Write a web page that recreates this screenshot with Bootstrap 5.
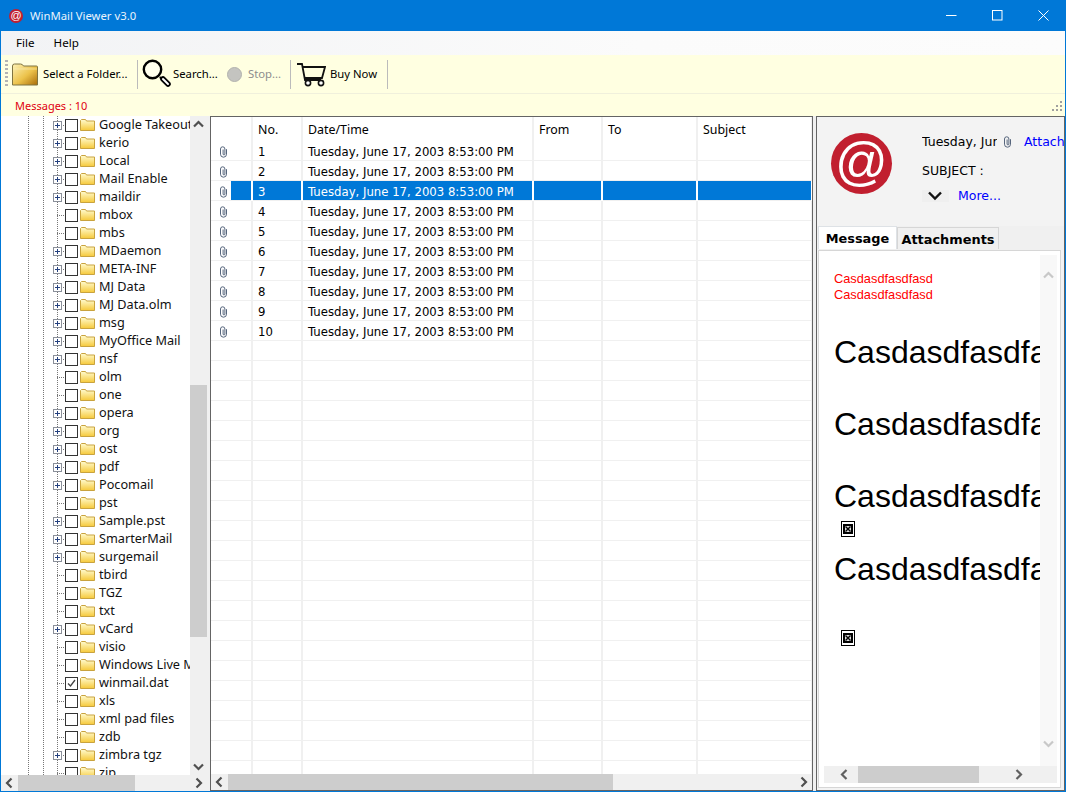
<!DOCTYPE html>
<html lang="en">
<head>
<meta charset="utf-8">
<title>WinMail Viewer v3.0</title>
<link rel="stylesheet" href="https://cdn.jsdelivr.net/npm/bootstrap@5.3.0/dist/css/bootstrap.min.css">
<style>
html,body{height:100%;overflow:hidden}
body{background:#0078d7;color:#000;font:11.3px/1.2 "Noto Sans",sans-serif;padding:0 1px 1px}
svg{display:block;flex:none}
.app{height:791px}
.titlebar{height:31px;color:#fff;font-size:11.3px;margin:0 -1px}
.t-logo{width:14px;height:14px;background:#c11f2f;color:#fff;font:11px/13px "Liberation Sans",sans-serif;margin:0 7px 0 9px;text-align:center}
.t-text{color:#e8f3fc}
.win{width:46px;height:31px;color:#fff}
.menubar{height:24px;background:linear-gradient(90deg,#f2f3f5,#fbfbfb 60%,#fcfcfc);font-size:11.6px;padding-left:15px;gap:19px}
.toolbar{height:39px;background:#ffffe1;border-bottom:1px solid #f0f0dc;padding-left:4px}
.grip{width:3px;height:28px;margin-right:4px;background:repeating-linear-gradient(#b4b4b4 0 2px,transparent 2px 4px)}
.sep{width:1px;height:29px;background:#bbb}
.tool{white-space:nowrap}
.t-select{margin-left:5px;width:85px}
.s1{margin-left:9px}
.t-glass{margin-left:4px}
.t-search{margin-left:1px;width:44px}
.stop{width:15px;height:15px;background:#c4c4c0;border:1px solid #b2b2ae;margin-left:10px}
.t-stop{margin-left:6px;width:33px;color:#8d8d8d}
.t-cart{margin-left:6px}
.t-buy{margin-left:4px;width:49px}
.s3{margin-left:8px}
.statusbar{height:22px;background:#ffffe1;color:#e00010;padding:2px 2px 0 14px;font-size:11px}
.main{height:675px;background:#f0f0f0;gap:3px}
.tree-pane{width:206px;background:#fff}
.tree-view{width:189px;overflow:hidden;font-size:12.7px;color:#111}
.tree{margin:0;padding:0;list-style:none;background-image:repeating-linear-gradient(#777 0 1px,transparent 1px 2px),repeating-linear-gradient(#777 0 1px,transparent 1px 2px),repeating-linear-gradient(#777 0 1px,transparent 1px 2px);background-size:1px 100%;background-position:27px 0,42px 0,56px 0;background-repeat:no-repeat}
.tree li{height:18px;padding-left:52px;white-space:nowrap}
.tw{width:12px;height:9px;background:repeating-linear-gradient(90deg,#777 0 1px,transparent 1px 2px) 4px 4px/8px 1px no-repeat;flex:none}
.plus{width:9px;height:9px;background:#fff;border:1px solid #8a8f99;display:block;position:relative}
.plus::before{content:"";position:absolute;left:1px;right:1px;top:3px;height:1px;background:#24407f}
.plus::after{content:"";position:absolute;top:1px;bottom:1px;left:3px;width:1px;background:#24407f}
.cb{width:13px;height:13px;margin-right:2px;border:1px solid #333;background:#fff;flex:none}
.tree .fo{margin-right:4px}
.sb{background:#f0f0f0;flex:none}
.sb-v{width:17px}
.sb-h{height:16px}
.arrow{width:17px;height:17px;color:#505050;flex:none}
.sb-h .arrow{height:16px}
.thumb{background:#cdcdcd;flex:none}
.tree-v-thumb{height:252px;margin-top:252px}
.tree-h-thumb{width:117px}
.list-pane{width:603px;border:1px solid #646464;background:#fff}
.grid-view{height:657px;overflow:hidden}
.grid{table-layout:fixed;width:601px;margin:0;--bs-table-bg:transparent;--bs-table-color:#000;color:#000;font-size:12.4px;border-collapse:collapse}
.grid th,.grid td{height:20px;padding:4px 0 0 5px;font-weight:400;border:0;border-bottom:1px solid #f0f0f0;border-right:2px solid #f0f0f0;vertical-align:middle;white-space:nowrap;overflow:hidden;box-shadow:none}
.grid th{height:23px;border-bottom:0;padding-top:3px}
.grid tbody td{font-family:"DejaVu Sans",sans-serif;font-size:11.7px}
.grid th:first-child,.grid td:first-child{padding-left:8px}
.grid tr.sel td{background:#0078d7;color:#fff;border-right-color:#fff}
.grid tr.sel td:first-child{background:linear-gradient(90deg,#fff 20px,#0078d7 20px)}
.list-h-thumb{width:385px}
.read-pane{width:249px;border:1px solid #646464;background:#f3f3f3}
.head{height:110px}
.avatar{width:61px;height:61px;background:#c11f2f;color:#fff;font:52px/56px "Liberation Sans",sans-serif;margin:16px 0 0 14px;text-align:center;flex:none}
.meta{margin-left:30px;padding-top:17px;width:142px;overflow:hidden;font:12.5px/1.2 "DejaVu Sans",sans-serif}
.clipped{width:75px;overflow:hidden;white-space:nowrap;flex:none}
.meta-clip{margin:0 12px 0 6px}
.blue{color:#00f;text-decoration:none;white-space:nowrap}
.subject{margin-top:14px;white-space:nowrap}
.chev{width:28px;height:12px;margin:0 9px 0 -1px;background:#efefef;flex:none}
.more{margin-top:10px}
.tabs{height:24px;background:#f0f0f0;padding-left:1px;border:0;margin-top:1px}
.tabs .nav-link{border-radius:0;color:#000;font:700 12.9px/1 "DejaVu Sans",sans-serif;padding:4px 0 0;border:1px solid #d6d6d6;border-bottom:0;background:#f0f0f0;width:102px;height:22px;margin-top:1px;display:flex;align-items:center;justify-content:center;margin-bottom:0}
.tabs .nav-link.active{width:79px;height:23px;margin-top:0;background:#fff;padding:2px 0 0;position:relative;z-index:1;margin-bottom:-1px}
.tab-body{margin:0 3px 2px 1px;border:1px solid #d6d6d6;background:#fff;padding:4px 3px 4px 5px;height:539px}
.doc-wrap{height:511px}
.doc{overflow:hidden;white-space:nowrap;font-family:"Liberation Sans",sans-serif;padding:16px 0 0 10px;min-width:0}
.sb-light{background:#f8f8f8;color:#c8c8c8;padding:12px 0 14px}
.sb-light .arrow{color:#c8c8c8}
.red{color:#f00;font-size:12.8px;line-height:16px}
.big{font-size:32px;line-height:38px;color:#000}
.big-1{margin-top:30px}
.big-n{margin-top:34px}
.broken{width:14px;height:16px;border:1px solid #000;padding:2px 1px;margin-left:7px;background:#fff}
.broken-1{margin-top:6px}
.broken-2{margin-top:42px}
.big-4{margin-top:13px}
.doc-h-thumb{width:121px;margin-left:5px}
.doc-sb{height:17px;padding-left:12px}
.doc-sb .arrow{color:#606060}
.doc-next{margin-right:30px}
</style>
</head>
<body>
<svg width="0" height="0" class="position-absolute">
<defs>
<linearGradient id="fy" x1="0" y1="0" x2="0" y2="1"><stop offset="0" stop-color="#fffbd0"/><stop offset="1" stop-color="#f6c93a"/></linearGradient>
<linearGradient id="fb" x1="0" y1="0" x2="1" y2="1"><stop offset="0" stop-color="#fdf3b8"/><stop offset=".55" stop-color="#ecc24a"/><stop offset="1" stop-color="#a96c08"/></linearGradient>
<symbol id="fold" viewBox="0 0 15 12"><path d="M.5 11.500V1.500l1-1h4l1 1.500h8v9.500z" fill="url(#fy)" stroke="#c9a33e"/></symbol>
<symbol id="clip" viewBox="0 0 9 12"><path d="M7.500 3.200v5a3 3 0 0 1-6 0V3a2.200 2.200 0 0 1 4.400 0v5a.9.900 0 0 1-1.800 0V3.500" fill="none" stroke="#56657c" stroke-width="1"/></symbol>
<symbol id="up" viewBox="0 0 17 17"><path d="M4 10.500l4.500-4.500 4.500 4.500" fill="none" stroke="currentColor" stroke-width="2.200"/></symbol>
<symbol id="down" viewBox="0 0 17 17"><path d="M4 6.500l4.500 4.500 4.500-4.500" fill="none" stroke="currentColor" stroke-width="2.200"/></symbol>
<symbol id="left" viewBox="0 0 17 16"><path d="M10.500 3.500l-4.500 4.500 4.500 4.500" fill="none" stroke="currentColor" stroke-width="2.200"/></symbol>
<symbol id="right" viewBox="0 0 17 16"><path d="M6.500 3.500l4.500 4.500-4.500 4.500" fill="none" stroke="currentColor" stroke-width="2.200"/></symbol>
<symbol id="bimg" viewBox="0 0 10 10"><rect width="10" height="10" fill="#000"/><rect x="2" y="2" width="6" height="6" fill="#ddd"/><path d="M2.500 2.500l5 5M7.500 2.500l-5 5" stroke="#000" stroke-width="1.400"/></symbol>
</defs>
</svg>
<div class="app d-flex flex-column">
  <div class="titlebar d-flex align-items-center">
    <div class="t-logo rounded-circle">@</div>
    <div class="t-text flex-grow-1">WinMail Viewer v3.0</div>
    <div class="win d-flex align-items-center justify-content-center"><svg width="11" height="11" viewBox="0 0 11 11"><path d="M0 5.500h10.500" stroke="#fff"/></svg></div>
    <div class="win d-flex align-items-center justify-content-center"><svg width="11" height="11" viewBox="0 0 11 11"><rect x=".5" y=".5" width="9.500" height="9.500" fill="none" stroke="#fff"/></svg></div>
    <div class="win d-flex align-items-center justify-content-center"><svg width="11" height="11" viewBox="0 0 11 11"><path d="M.5.500l10 10M10.500.500l-10 10" stroke="#fff"/></svg></div>
  </div>
  <div class="menubar d-flex align-items-center"><span>File</span><span>Help</span></div>
  <div class="toolbar d-flex align-items-center">
    <div class="grip"></div>
    <svg width="26" height="23" viewBox="0 0 26 23"><path d="M.5 22V3q0-2 2-2h6q2 0 3 2h13q1 0 1 1v18z" fill="url(#fb)" stroke="#7f7442"/><path d="M1 6h24" stroke="#f8f0c0" stroke-opacity=".6"/></svg>
    <span class="tool t-select">Select a Folder...</span>
    <div class="sep s1"></div>
    <svg class="t-glass" width="30" height="30" viewBox="0 0 30 30"><circle cx="10.500" cy="10.500" r="8.700" fill="#fff" fill-opacity=".4" stroke="#000" stroke-width="2.400"/><path d="M18 18l2 2" stroke="#000" stroke-width="2.400"/><path d="M21 20l5 5" stroke="#000" stroke-width="5.500" stroke-linecap="round"/><path d="M21 20l5 5" stroke="#fff" stroke-width="2" stroke-linecap="round"/></svg>
    <span class="tool t-search">Search...</span>
    <div class="stop rounded-circle"></div>
    <span class="tool t-stop">Stop...</span>
    <div class="sep s1"></div>
    <svg class="t-cart" width="29" height="25" viewBox="0 0 29 25"><path d="M0 2h5l3 16h16M6 5h22l-3 11H8" fill="none" stroke="#111" stroke-width="1.800"/><circle cx="11" cy="21" r="2.600" fill="#fff" stroke="#111" stroke-width="1.600"/><circle cx="24" cy="21" r="2.600" fill="#fff" stroke="#111" stroke-width="1.600"/></svg>
    <span class="tool t-buy">Buy Now</span>
    <div class="sep s3"></div>
  </div>
  <div class="statusbar d-flex align-items-center justify-content-between"><span>Messages : 10</span><svg width="11" height="11" viewBox="0 0 11 11" fill="#a0a0a0"><rect x="8" y="0" width="2" height="2"/><rect x="4" y="4" width="2" height="2"/><rect x="8" y="4" width="2" height="2"/><rect x="0" y="8" width="2" height="2"/><rect x="4" y="8" width="2" height="2"/><rect x="8" y="8" width="2" height="2"/></svg></div>
  <div class="main d-flex">
    <div class="tree-pane d-flex flex-column">
      <div class="d-flex flex-grow-1 overflow-hidden">
        <div class="tree-view flex-grow-1">
          <ul class="tree">
            <li class="d-flex align-items-center"><span class="tw"><i class="plus"></i></span><span class="cb"></span><svg class="fo" width="15" height="12"><use href="#fold"/></svg><span>Google Takeout</span></li>
            <li class="d-flex align-items-center"><span class="tw"><i class="plus"></i></span><span class="cb"></span><svg class="fo" width="15" height="12"><use href="#fold"/></svg><span>kerio</span></li>
            <li class="d-flex align-items-center"><span class="tw"><i class="plus"></i></span><span class="cb"></span><svg class="fo" width="15" height="12"><use href="#fold"/></svg><span>Local</span></li>
            <li class="d-flex align-items-center"><span class="tw"><i class="plus"></i></span><span class="cb"></span><svg class="fo" width="15" height="12"><use href="#fold"/></svg><span>Mail Enable</span></li>
            <li class="d-flex align-items-center"><span class="tw"><i class="plus"></i></span><span class="cb"></span><svg class="fo" width="15" height="12"><use href="#fold"/></svg><span>maildir</span></li>
            <li class="d-flex align-items-center"><span class="tw"></span><span class="cb"></span><svg class="fo" width="15" height="12"><use href="#fold"/></svg><span>mbox</span></li>
            <li class="d-flex align-items-center"><span class="tw"></span><span class="cb"></span><svg class="fo" width="15" height="12"><use href="#fold"/></svg><span>mbs</span></li>
            <li class="d-flex align-items-center"><span class="tw"><i class="plus"></i></span><span class="cb"></span><svg class="fo" width="15" height="12"><use href="#fold"/></svg><span>MDaemon</span></li>
            <li class="d-flex align-items-center"><span class="tw"><i class="plus"></i></span><span class="cb"></span><svg class="fo" width="15" height="12"><use href="#fold"/></svg><span>META-INF</span></li>
            <li class="d-flex align-items-center"><span class="tw"><i class="plus"></i></span><span class="cb"></span><svg class="fo" width="15" height="12"><use href="#fold"/></svg><span>MJ Data</span></li>
            <li class="d-flex align-items-center"><span class="tw"><i class="plus"></i></span><span class="cb"></span><svg class="fo" width="15" height="12"><use href="#fold"/></svg><span>MJ Data.olm</span></li>
            <li class="d-flex align-items-center"><span class="tw"><i class="plus"></i></span><span class="cb"></span><svg class="fo" width="15" height="12"><use href="#fold"/></svg><span>msg</span></li>
            <li class="d-flex align-items-center"><span class="tw"><i class="plus"></i></span><span class="cb"></span><svg class="fo" width="15" height="12"><use href="#fold"/></svg><span>MyOffice Mail</span></li>
            <li class="d-flex align-items-center"><span class="tw"><i class="plus"></i></span><span class="cb"></span><svg class="fo" width="15" height="12"><use href="#fold"/></svg><span>nsf</span></li>
            <li class="d-flex align-items-center"><span class="tw"></span><span class="cb"></span><svg class="fo" width="15" height="12"><use href="#fold"/></svg><span>olm</span></li>
            <li class="d-flex align-items-center"><span class="tw"></span><span class="cb"></span><svg class="fo" width="15" height="12"><use href="#fold"/></svg><span>one</span></li>
            <li class="d-flex align-items-center"><span class="tw"><i class="plus"></i></span><span class="cb"></span><svg class="fo" width="15" height="12"><use href="#fold"/></svg><span>opera</span></li>
            <li class="d-flex align-items-center"><span class="tw"><i class="plus"></i></span><span class="cb"></span><svg class="fo" width="15" height="12"><use href="#fold"/></svg><span>org</span></li>
            <li class="d-flex align-items-center"><span class="tw"><i class="plus"></i></span><span class="cb"></span><svg class="fo" width="15" height="12"><use href="#fold"/></svg><span>ost</span></li>
            <li class="d-flex align-items-center"><span class="tw"><i class="plus"></i></span><span class="cb"></span><svg class="fo" width="15" height="12"><use href="#fold"/></svg><span>pdf</span></li>
            <li class="d-flex align-items-center"><span class="tw"><i class="plus"></i></span><span class="cb"></span><svg class="fo" width="15" height="12"><use href="#fold"/></svg><span>Pocomail</span></li>
            <li class="d-flex align-items-center"><span class="tw"></span><span class="cb"></span><svg class="fo" width="15" height="12"><use href="#fold"/></svg><span>pst</span></li>
            <li class="d-flex align-items-center"><span class="tw"><i class="plus"></i></span><span class="cb"></span><svg class="fo" width="15" height="12"><use href="#fold"/></svg><span>Sample.pst</span></li>
            <li class="d-flex align-items-center"><span class="tw"><i class="plus"></i></span><span class="cb"></span><svg class="fo" width="15" height="12"><use href="#fold"/></svg><span>SmarterMail</span></li>
            <li class="d-flex align-items-center"><span class="tw"><i class="plus"></i></span><span class="cb"></span><svg class="fo" width="15" height="12"><use href="#fold"/></svg><span>surgemail</span></li>
            <li class="d-flex align-items-center"><span class="tw"></span><span class="cb"></span><svg class="fo" width="15" height="12"><use href="#fold"/></svg><span>tbird</span></li>
            <li class="d-flex align-items-center"><span class="tw"></span><span class="cb"></span><svg class="fo" width="15" height="12"><use href="#fold"/></svg><span>TGZ</span></li>
            <li class="d-flex align-items-center"><span class="tw"></span><span class="cb"></span><svg class="fo" width="15" height="12"><use href="#fold"/></svg><span>txt</span></li>
            <li class="d-flex align-items-center"><span class="tw"><i class="plus"></i></span><span class="cb"></span><svg class="fo" width="15" height="12"><use href="#fold"/></svg><span>vCard</span></li>
            <li class="d-flex align-items-center"><span class="tw"></span><span class="cb"></span><svg class="fo" width="15" height="12"><use href="#fold"/></svg><span>visio</span></li>
            <li class="d-flex align-items-center"><span class="tw"></span><span class="cb"></span><svg class="fo" width="15" height="12"><use href="#fold"/></svg><span>Windows Live Mail</span></li>
            <li class="d-flex align-items-center"><span class="tw"></span><span class="cb"><svg width="11" height="11" viewBox="0 0 11 11"><path d="M2 5.500l2.500 2.500 4.500-6" fill="none" stroke="#444" stroke-width="1.300"/></svg></span><svg class="fo" width="15" height="12"><use href="#fold"/></svg><span>winmail.dat</span></li>
            <li class="d-flex align-items-center"><span class="tw"></span><span class="cb"></span><svg class="fo" width="15" height="12"><use href="#fold"/></svg><span>xls</span></li>
            <li class="d-flex align-items-center"><span class="tw"></span><span class="cb"></span><svg class="fo" width="15" height="12"><use href="#fold"/></svg><span>xml pad files</span></li>
            <li class="d-flex align-items-center"><span class="tw"></span><span class="cb"></span><svg class="fo" width="15" height="12"><use href="#fold"/></svg><span>zdb</span></li>
            <li class="d-flex align-items-center"><span class="tw"><i class="plus"></i></span><span class="cb"></span><svg class="fo" width="15" height="12"><use href="#fold"/></svg><span>zimbra tgz</span></li>
            <li class="d-flex align-items-center"><span class="tw"></span><span class="cb"></span><svg class="fo" width="15" height="12"><use href="#fold"/></svg><span>zip</span></li>
          </ul>
        </div>
        <div class="sb sb-v d-flex flex-column">
          <svg class="arrow"><use href="#up"/></svg>
          <div class="thumb tree-v-thumb"></div>
          <div class="flex-grow-1"></div>
          <svg class="arrow"><use href="#down"/></svg>
        </div>
      </div>
      <div class="sb sb-h d-flex">
        <svg class="arrow"><use href="#left"/></svg>
        <div class="thumb tree-h-thumb"></div>
        <div class="flex-grow-1"></div>
        <svg class="arrow"><use href="#right"/></svg>
      </div>
    </div>
    <div class="list-pane d-flex flex-column">
      <div class="grid-view">
        <table class="table grid">
          <colgroup><col style="width:41px"><col style="width:50px"><col style="width:231px"><col style="width:69px"><col style="width:95px"><col style="width:115px"></colgroup>
          <thead><tr><th></th><th>No.</th><th>Date/Time</th><th>From</th><th>To</th><th>Subject</th></tr></thead>
          <tbody>
            <tr><td><svg width="9" height="12"><use href="#clip"/></svg></td><td>1</td><td>Tuesday, June 17, 2003 8:53:00 PM</td><td></td><td></td><td></td></tr>
            <tr><td><svg width="9" height="12"><use href="#clip"/></svg></td><td>2</td><td>Tuesday, June 17, 2003 8:53:00 PM</td><td></td><td></td><td></td></tr>
            <tr class="sel"><td><svg width="9" height="12"><use href="#clip"/></svg></td><td>3</td><td>Tuesday, June 17, 2003 8:53:00 PM</td><td></td><td></td><td></td></tr>
            <tr><td><svg width="9" height="12"><use href="#clip"/></svg></td><td>4</td><td>Tuesday, June 17, 2003 8:53:00 PM</td><td></td><td></td><td></td></tr>
            <tr><td><svg width="9" height="12"><use href="#clip"/></svg></td><td>5</td><td>Tuesday, June 17, 2003 8:53:00 PM</td><td></td><td></td><td></td></tr>
            <tr><td><svg width="9" height="12"><use href="#clip"/></svg></td><td>6</td><td>Tuesday, June 17, 2003 8:53:00 PM</td><td></td><td></td><td></td></tr>
            <tr><td><svg width="9" height="12"><use href="#clip"/></svg></td><td>7</td><td>Tuesday, June 17, 2003 8:53:00 PM</td><td></td><td></td><td></td></tr>
            <tr><td><svg width="9" height="12"><use href="#clip"/></svg></td><td>8</td><td>Tuesday, June 17, 2003 8:53:00 PM</td><td></td><td></td><td></td></tr>
            <tr><td><svg width="9" height="12"><use href="#clip"/></svg></td><td>9</td><td>Tuesday, June 17, 2003 8:53:00 PM</td><td></td><td></td><td></td></tr>
            <tr><td><svg width="9" height="12"><use href="#clip"/></svg></td><td>10</td><td>Tuesday, June 17, 2003 8:53:00 PM</td><td></td><td></td><td></td></tr>
            <tr><td></td><td></td><td></td><td></td><td></td><td></td></tr>
            <tr><td></td><td></td><td></td><td></td><td></td><td></td></tr>
            <tr><td></td><td></td><td></td><td></td><td></td><td></td></tr>
            <tr><td></td><td></td><td></td><td></td><td></td><td></td></tr>
            <tr><td></td><td></td><td></td><td></td><td></td><td></td></tr>
            <tr><td></td><td></td><td></td><td></td><td></td><td></td></tr>
            <tr><td></td><td></td><td></td><td></td><td></td><td></td></tr>
            <tr><td></td><td></td><td></td><td></td><td></td><td></td></tr>
            <tr><td></td><td></td><td></td><td></td><td></td><td></td></tr>
            <tr><td></td><td></td><td></td><td></td><td></td><td></td></tr>
            <tr><td></td><td></td><td></td><td></td><td></td><td></td></tr>
            <tr><td></td><td></td><td></td><td></td><td></td><td></td></tr>
            <tr><td></td><td></td><td></td><td></td><td></td><td></td></tr>
            <tr><td></td><td></td><td></td><td></td><td></td><td></td></tr>
            <tr><td></td><td></td><td></td><td></td><td></td><td></td></tr>
            <tr><td></td><td></td><td></td><td></td><td></td><td></td></tr>
            <tr><td></td><td></td><td></td><td></td><td></td><td></td></tr>
            <tr><td></td><td></td><td></td><td></td><td></td><td></td></tr>
            <tr><td></td><td></td><td></td><td></td><td></td><td></td></tr>
            <tr><td></td><td></td><td></td><td></td><td></td><td></td></tr>
            <tr><td></td><td></td><td></td><td></td><td></td><td></td></tr>
            <tr><td></td><td></td><td></td><td></td><td></td><td></td></tr>
          </tbody>
        </table>
      </div>
      <div class="sb sb-h d-flex">
        <svg class="arrow"><use href="#left"/></svg>
        <div class="thumb list-h-thumb"></div>
        <div class="flex-grow-1"></div>
        <svg class="arrow"><use href="#right"/></svg>
      </div>
    </div>
    <div class="read-pane d-flex flex-column">
      <div class="head d-flex">
        <div class="avatar rounded-circle">@</div>
        <div class="meta">
          <div class="d-flex align-items-center">
            <span class="clipped">Tuesday, June</span>
            <svg class="meta-clip" width="9" height="12"><use href="#clip"/></svg>
            <a href="#" class="blue">Attachment</a>
          </div>
          <div class="subject">SUBJECT :</div>
          <div class="d-flex align-items-center more">
            <span class="chev d-flex align-items-center justify-content-center"><svg width="16" height="10" viewBox="0 0 16 10"><path d="M2 1.500l6 6 6-6" fill="none" stroke="#111" stroke-width="2.400"/></svg></span>
            <a href="#" class="blue">More...</a>
          </div>
        </div>
      </div>
      <ul class="nav nav-tabs tabs">
        <li class="nav-item"><a class="nav-link active" href="#">Message</a></li>
        <li class="nav-item"><a class="nav-link" href="#">Attachments</a></li>
      </ul>
      <div class="tab-body d-flex flex-column">
        <div class="doc-wrap d-flex">
          <div class="doc flex-grow-1">
            <div class="red">Casdasdfasdfasd</div>
            <div class="red">Casdasdfasdfasd</div>
            <div class="big big-1">Casdasdfasdfasd</div>
            <div class="big big-n">Casdasdfasdfasd</div>
            <div class="big big-n">Casdasdfasdfasd</div>
            <div class="broken broken-1"><svg width="10" height="10"><use href="#bimg"/></svg></div>
            <div class="big big-4">Casdasdfasdfasd</div>
            <div class="broken broken-2"><svg width="10" height="10"><use href="#bimg"/></svg></div>
          </div>
          <div class="sb sb-v sb-light d-flex flex-column justify-content-between">
            <svg class="arrow"><use href="#up"/></svg>
            <svg class="arrow"><use href="#down"/></svg>
          </div>
        </div>
        <div class="sb doc-sb d-flex">
          <svg class="arrow"><use href="#left"/></svg>
          <div class="thumb doc-h-thumb"></div>
          <div class="flex-grow-1"></div>
          <svg class="arrow doc-next"><use href="#right"/></svg>
        </div>
      </div>
    </div>
  </div>
</div>
<script src="https://cdn.jsdelivr.net/npm/bootstrap@5.3.0/dist/js/bootstrap.bundle.min.js"></script>
</body>
</html>
